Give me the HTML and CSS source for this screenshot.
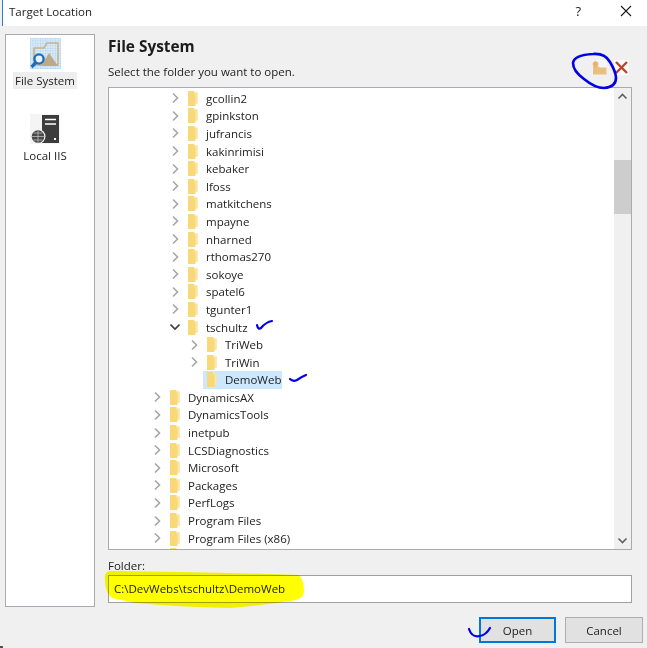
FILE: index.html
```html
<!DOCTYPE html>
<html lang="en">
<head>
<meta charset="utf-8">
<title>Target Location</title>
<link rel="stylesheet" href="styles.css">
</head>
<body>
<svg class="defs" width="0" height="0" aria-hidden="true">
  <defs>
    <symbol id="folder" viewBox="0 0 10 15">
      <path d="M0 0H6L7 1.500H9.500V12.500L7.500 12.600V15H0Z" fill="#f9d878"/>
      <path d="M6 0L7 1.500H9.500V12.500L7.500 12.600V2.500H6Z" fill="#fbe6a8"/>
    </symbol>
    <symbol id="right" viewBox="0 0 10 12"><path d="M3 1.500L7.500 6L3 10.500" fill="none" stroke="#a6a6a6" stroke-width="1.600"/></symbol>
    <symbol id="down" viewBox="0 0 10 12"><path d="M0.500 3.500L5 8L9.500 3.500" fill="none" stroke="#404040" stroke-width="1.600"/></symbol>
    <pattern id="grid" width="2.500" height="2.500" patternUnits="userSpaceOnUse">
      <rect width="2.500" height="2.500" fill="#dcecf9"/>
      <path d="M0 0H2.500M0 0V2.500" stroke="#a9cdec" stroke-width="0.800"/>
    </pattern>
  </defs>
</svg>
<div class="window">
  <header class="titlebar">
    <span class="title">Target Location</span>
    <span class="help">?</span>
    <svg class="close" width="12" height="12" viewBox="0 0 12 12"><path d="M1 1L11 11M11 1L1 11" stroke="#1a1a1a" stroke-width="1.100"/></svg>
  </header>
  <div class="content">
    <nav class="sidebar">
      <div class="source">
        <svg width="31" height="31" viewBox="0 0 31 31">
          <rect width="31" height="31" fill="url(#grid)"/>
          <path d="M4 27V10H14L17 5H28V27Z" fill="none" stroke="#c9b48a" stroke-width="1.600"/>
          <path d="M11 28L19 15L28 28Z" fill="#bda987"/>
          <circle cx="9" cy="21" r="4.600" fill="#eaf3fb" stroke="#1f6fb8" stroke-width="2.400"/>
          <path d="M6 24.500L1.500 29" stroke="#1f6fb8" stroke-width="3.200"/>
        </svg>
        <span class="source-label selected">File System</span>
      </div>
      <div class="source source-iis">
        <svg width="30" height="30" viewBox="0 0 30 30">
          <rect width="30" height="30" fill="#f4f4f4"/>
          <rect x="12" y="1" width="17" height="28" fill="#3c3c3c"/>
          <path d="M15 5.500H26M15 10H26" stroke="#fff" stroke-width="1.600"/>
          <rect x="24" y="24" width="2" height="2" fill="#fff"/>
          <circle cx="8" cy="22.500" r="7.500" fill="#f4f4f4"/>
          <circle cx="8" cy="22.500" r="6.300" fill="#4a4a4a"/>
          <path d="M2 22.500H14M8 16.500V28.500M3.500 19H12.500M3.500 26H12.500" stroke="#c8c8c8" stroke-width="0.700"/>
        </svg>
        <span class="source-label">Local IIS</span>
      </div>
    </nav>
    <main class="panel">
      <div class="panel-head">
        <div>
          <h1 class="heading">File System</h1>
          <p class="sub">Select the folder you want to open.</p>
        </div>
        <div class="tools">
          <svg width="15" height="15" viewBox="0 0 15 15">
            <rect width="15" height="15" fill="#f6f6f6"/>
            <path d="M1 14.500V6H6L7.500 7.500H14.500V14.500Z" fill="#e8bf80"/>
            <circle cx="3.500" cy="4" r="2.400" fill="#e0a458"/>
            <path d="M3.500 0.500V7.500M0 4H7M1 1.500L6 6.500M6 1.500L1 6.500" stroke="#e8b878" stroke-width="0.800"/>
          </svg>
          <svg width="15" height="15" viewBox="0 0 15 15">
            <rect width="15" height="15" fill="#fbfbfb"/>
            <path d="M2 2L13 13M13 2L2 13" stroke="#b5482f" stroke-width="2.400"/>
          </svg>
        </div>
      </div>
      <div class="tree">
        <ul class="rows">
          <li class="row lvl1"><svg class="chev"><use href="#right"/></svg><svg class="fold"><use href="#folder"/></svg><span>gcollin2</span></li>
          <li class="row lvl1"><svg class="chev"><use href="#right"/></svg><svg class="fold"><use href="#folder"/></svg><span>gpinkston</span></li>
          <li class="row lvl1"><svg class="chev"><use href="#right"/></svg><svg class="fold"><use href="#folder"/></svg><span>jufrancis</span></li>
          <li class="row lvl1"><svg class="chev"><use href="#right"/></svg><svg class="fold"><use href="#folder"/></svg><span>kakinrimisi</span></li>
          <li class="row lvl1"><svg class="chev"><use href="#right"/></svg><svg class="fold"><use href="#folder"/></svg><span>kebaker</span></li>
          <li class="row lvl1"><svg class="chev"><use href="#right"/></svg><svg class="fold"><use href="#folder"/></svg><span>lfoss</span></li>
          <li class="row lvl1"><svg class="chev"><use href="#right"/></svg><svg class="fold"><use href="#folder"/></svg><span>matkitchens</span></li>
          <li class="row lvl1"><svg class="chev"><use href="#right"/></svg><svg class="fold"><use href="#folder"/></svg><span>mpayne</span></li>
          <li class="row lvl1"><svg class="chev"><use href="#right"/></svg><svg class="fold"><use href="#folder"/></svg><span>nharned</span></li>
          <li class="row lvl1"><svg class="chev"><use href="#right"/></svg><svg class="fold"><use href="#folder"/></svg><span>rthomas270</span></li>
          <li class="row lvl1"><svg class="chev"><use href="#right"/></svg><svg class="fold"><use href="#folder"/></svg><span>sokoye</span></li>
          <li class="row lvl1"><svg class="chev"><use href="#right"/></svg><svg class="fold"><use href="#folder"/></svg><span>spatel6</span></li>
          <li class="row lvl1"><svg class="chev"><use href="#right"/></svg><svg class="fold"><use href="#folder"/></svg><span>tgunter1</span></li>
          <li class="row lvl1"><svg class="chev"><use href="#down"/></svg><svg class="fold"><use href="#folder"/></svg><span>tschultz</span></li>
          <li class="row lvl2"><svg class="chev"><use href="#right"/></svg><svg class="fold"><use href="#folder"/></svg><span>TriWeb</span></li>
          <li class="row lvl2"><svg class="chev"><use href="#right"/></svg><svg class="fold"><use href="#folder"/></svg><span>TriWin</span></li>
          <li class="row lvl2"><span class="chev"></span><span class="sel"><svg class="fold"><use href="#folder"/></svg><span>DemoWeb</span></span></li>
          <li class="row lvl0"><svg class="chev"><use href="#right"/></svg><svg class="fold"><use href="#folder"/></svg><span>DynamicsAX</span></li>
          <li class="row lvl0"><svg class="chev"><use href="#right"/></svg><svg class="fold"><use href="#folder"/></svg><span>DynamicsTools</span></li>
          <li class="row lvl0"><svg class="chev"><use href="#right"/></svg><svg class="fold"><use href="#folder"/></svg><span>inetpub</span></li>
          <li class="row lvl0"><svg class="chev"><use href="#right"/></svg><svg class="fold"><use href="#folder"/></svg><span>LCSDiagnostics</span></li>
          <li class="row lvl0"><svg class="chev"><use href="#right"/></svg><svg class="fold"><use href="#folder"/></svg><span>Microsoft</span></li>
          <li class="row lvl0"><svg class="chev"><use href="#right"/></svg><svg class="fold"><use href="#folder"/></svg><span>Packages</span></li>
          <li class="row lvl0"><svg class="chev"><use href="#right"/></svg><svg class="fold"><use href="#folder"/></svg><span>PerfLogs</span></li>
          <li class="row lvl0"><svg class="chev"><use href="#right"/></svg><svg class="fold"><use href="#folder"/></svg><span>Program Files</span></li>
          <li class="row lvl0"><svg class="chev"><use href="#right"/></svg><svg class="fold"><use href="#folder"/></svg><span>Program Files (x86)</span></li>
          <li class="row lvl0"><svg class="chev"><use href="#right"/></svg><svg class="fold"><use href="#folder"/></svg></li>
        </ul>
        <div class="scrollbar">
          <svg class="arrow" width="17" height="17" viewBox="0 0 17 17"><path d="M4.500 10.500L8.500 6.500L12.500 10.500" fill="none" stroke="#606060" stroke-width="1.600"/></svg>
          <div class="track"><div class="thumb"></div></div>
          <svg class="arrow" width="17" height="17" viewBox="0 0 17 17"><path d="M4.500 6.500L8.500 10.500L12.500 6.500" fill="none" stroke="#606060" stroke-width="1.600"/></svg>
        </div>
      </div>
      <label class="folder-label">Folder:</label>
      <div class="folder-input">C:\DevWebs\tschultz\DemoWeb</div>
    </main>
  </div>
  <footer class="actions">
    <button class="btn btn-primary">Open</button>
    <button class="btn">Cancel</button>
  </footer>
  <svg class="ink-marker" width="647" height="648" viewBox="0 0 647 648" aria-hidden="true">
    <path d="M105 575Q106 571 112 571L180 572Q240 573 299 575Q304 580 304 592Q303 600 290 601Q265 605 230 608Q180 607 135 603L112 598Q104 592 105 575Z" fill="#ffff00"/>
  </svg>
  <svg class="ink-pen" width="647" height="648" viewBox="0 0 647 648" aria-hidden="true">
    <g fill="none" stroke="#0000e6" stroke-linecap="round">
      <path stroke-width="2.600" d="M593 54Q605 53 610 62Q616 72 616 78Q616 87 604 88Q595 88 584 79Q573 71 573 63Q574 55 593 54Z"/>
      <path stroke-width="2.200" d="M257 325Q258 330 261 328Q266 322 272 321"/>
      <path stroke-width="2.200" d="M290 379Q293 382 297 380Q301 377 306 375"/>
      <path stroke-width="2.200" d="M469 629Q472 638 480 636Q486 635 490 628"/>
    </g>
  </svg>
  <div class="corner-pixels"></div>
</div>
</body>
</html>
```

FILE: styles.css
```css
* { box-sizing: border-box; }
html, body { margin: 0; padding: 0; }
body {
  width: 647px;
  height: 648px;
  overflow: hidden;
  font-family: "Open Sans", "Noto Sans", sans-serif;
  font-size: 11.500px;
  color: #222;
}
.defs { position: absolute; }
.window {
  position: relative;
  width: 647px;
  height: 648px;
  background: #f0f0f0;
  display: flex;
  flex-direction: column;
}
.titlebar {
  height: 26px;
  background: #fff;
  display: flex;
  align-items: center;
  margin-left: 2px;
  padding-left: 6px;
  padding-bottom: 4px;
  border-left: 1px solid #2b7cd3;
}
.title { flex: 1; line-height: 21px; }
.help { margin-right: 39px; font-size: 13px; }
.close { margin-right: 15px; }
.content {
  display: flex;
  height: 581px;
  padding: 8px 15px 0 5px;
}
.sidebar {
  width: 90px;
  height: 573px;
  background: #fff;
  border: 1px solid #a9a9b0;
  display: flex;
  flex-direction: column;
  align-items: center;
  padding: 3px 10px 0 0;
}
.source {
  display: flex;
  flex-direction: column;
  align-items: center;
}
.source-iis { margin-top: 25px; }
.source-label {
  margin-top: 3px;
  padding: 0 2px;
  line-height: 17px;
  white-space: nowrap;
}
.source-label.selected { background: #eeeeee; }
.panel {
  flex: 1;
  min-width: 0;
  margin-left: 13px;
  display: flex;
  flex-direction: column;
}
.panel-head {
  height: 53px;
  display: flex;
  justify-content: space-between;
  align-items: flex-end;
}
.heading {
  margin: 0;
  font-size: 15.400px;
  font-weight: 700;
  line-height: 20px;
  color: #1c1c1c;
}
.sub { margin: 6px 0 6px; line-height: 18px; }
.tools {
  display: flex;
  gap: 7px;
  padding-right: 3px;
  margin-bottom: 12px;
}
.tree {
  height: 463px;
  background: #fff;
  border: 1px solid #a9a9b0;
  display: flex;
  overflow: hidden;
}
.rows {
  flex: 1;
  margin: 0;
  padding: 1.500px 0 0;
  list-style: none;
  overflow: hidden;
}
.row {
  height: 17.600px;
  display: flex;
  align-items: center;
  white-space: nowrap;
}
.lvl0 { padding-left: 43px; }
.lvl1 { padding-left: 61px; }
.lvl2 { padding-left: 80px; }
.chev {
  width: 10px;
  height: 12px;
  margin-right: 8px;
  flex: none;
}
.fold {
  width: 10px;
  height: 15px;
  margin-right: 8px;
  flex: none;
}
.sel {
  display: flex;
  align-items: center;
  height: 17.600px;
  margin-left: -4px;
  padding: 0 1px 0 4px;
  background: #cce8ff;
}
.scrollbar {
  width: 17px;
  flex: none;
  background: #f0f0f0;
  display: flex;
  flex-direction: column;
}
.arrow { flex: none; }
.track { flex: 1; padding-top: 55px; }
.thumb { height: 54px; background: #cdcdcd; }
.folder-label {
  display: block;
  margin-top: 7px;
  line-height: 17px;
  height: 18px;
}
.folder-input {
  height: 28px;
  background: #fff;
  border: 1px solid #a0a0a0;
  padding-left: 5px;
  line-height: 26px;
}
.actions {
  display: flex;
  justify-content: flex-end;
  gap: 9px;
  padding-right: 4px;
  margin-top: 10px;
}
.btn {
  width: 78px;
  height: 26px;
  padding: 0;
  background: #e1e1e1;
  border: 1px solid #adadad;
  font: inherit;
  color: #222;
}
.btn-primary {
  width: 77px;
  border: 2px solid #0078d7;
}
.ink-marker {
  position: absolute;
  left: 0;
  top: 0;
  mix-blend-mode: multiply;
  pointer-events: none;
}
.ink-pen {
  position: absolute;
  left: 0;
  top: 0;
  pointer-events: none;
}
.corner-pixels {
  position: absolute;
  left: 0;
  bottom: 0;
  width: 3px;
  height: 2px;
  background: linear-gradient(90deg, #d02020 33%, #2040c0 33% 66%, #208040 66%);
}
```
